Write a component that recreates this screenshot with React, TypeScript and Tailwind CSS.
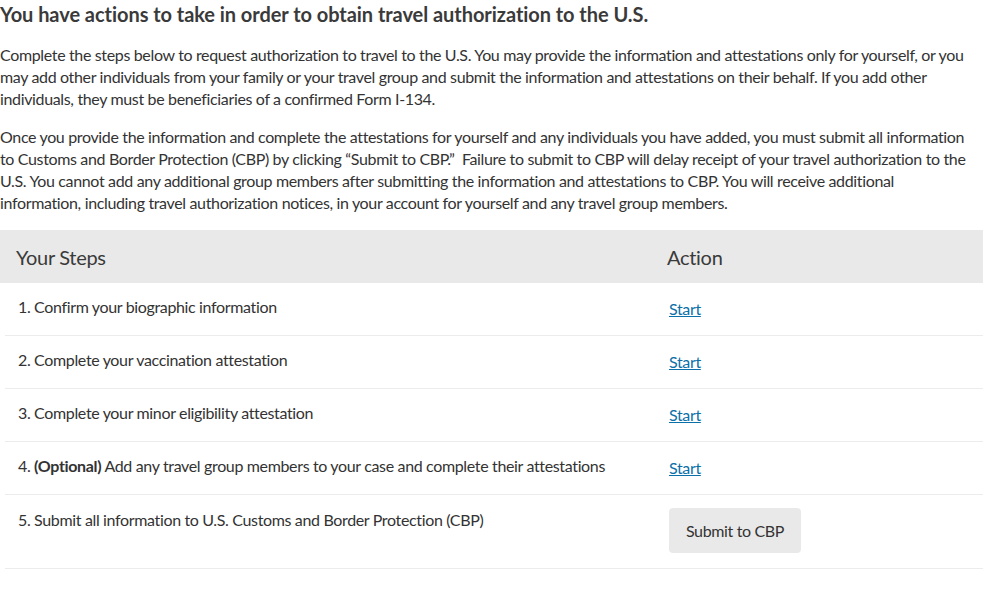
import React from "react";

const rows: { n: string; opt?: boolean; text: string; btn?: boolean }[] = [
  { n: "1.", text: "Confirm your biographic information" },
  { n: "2.", text: "Complete your vaccination attestation" },
  { n: "3.", text: "Complete your minor eligibility attestation" },
  { n: "4.", opt: true, text: "Add any travel group members to your case and complete their attestations" },
  { n: "5.", text: "Submit all information to U.S. Customs and Border Protection (CBP)", btn: true },
];

export default function App() {
  return (
    <div className="w-[1000px] h-[594px] bg-white text-[#333] overflow-hidden" style={{ fontFamily: "Lato, 'Noto Sans', sans-serif" }}>
      <div className="w-[983px]">
        <h1 className="text-[20px] font-bold leading-[28px] text-[#3a3a3a] whitespace-nowrap tracking-[-0.05px]">
          You have actions to take in order to obtain travel authorization to the U.S.
        </h1>
        <p className="mt-[16px] text-[16px] leading-[22px] whitespace-nowrap tracking-[-0.35px]">
          Complete the steps below to request authorization to travel to the U.S. You may provide the information and attestations only for yourself, or you
          <br />
          may add other individuals from your family or your travel group and submit the information and attestations on their behalf. If you add other
          <br />
          individuals, they must be beneficiaries of a confirmed Form I-134.
        </p>
        <p className="mt-[16px] text-[16px] leading-[22px] whitespace-nowrap tracking-[-0.35px]">
          Once you provide the information and complete the attestations for yourself and any individuals you have added, you must submit all information
          <br />
          to Customs and Border Protection (CBP) by clicking “Submit to CBP.”&nbsp; Failure to submit to CBP will delay receipt of your travel authorization to the
          <br />
          U.S. You cannot add any additional group members after submitting the information and attestations to CBP. You will receive additional
          <br />
          information, including travel authorization notices, in your account for yourself and any travel group members.
        </p>

        <div className="mt-[16px]">
          <div className="flex h-[53px] items-center bg-[#e9e9e9] text-[20px] text-[#3a3a3a] tracking-[-0.3px]">
            <div className="w-[667px] pl-[16px]">Your Steps</div>
            <div>Action</div>
          </div>
          {rows.map((r, i) => (
            <div
              key={i}
              className={`ml-[5px] flex border-b border-[#ececec] text-[16px] leading-[22px] tracking-[-0.35px] ${r.btn ? "h-[74px]" : "h-[53px]"}`}
            >
              <div className={`w-[664px] pl-[13px] ${r.btn ? "pt-[14px]" : "pt-[13px]"}`}>
                {r.n} {r.opt && <b className="font-bold">(Optional)</b>} {r.text}
              </div>
              {r.btn ? (
                <div className="pt-[13px]">
                  <button className="h-[45px] w-[132px] rounded-[4px] bg-[#e9e9e9] text-[16px] text-[#333] tracking-[-0.35px]">
                    Submit to CBP
                  </button>
                </div>
              ) : (
                <div className="pt-[15px]">
                  <a href="#" className="text-[#0b6fa8] underline">Start</a>
                </div>
              )}
            </div>
          ))}
        </div>
      </div>
    </div>
  );
}
